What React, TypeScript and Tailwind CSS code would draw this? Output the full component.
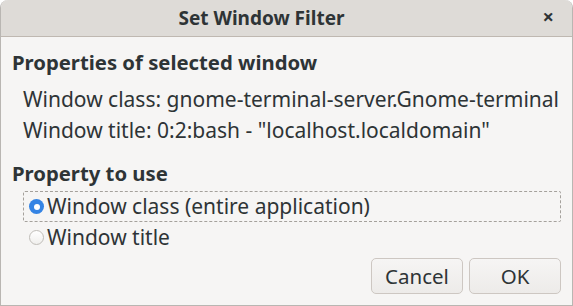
import React from "react";

const Radio: React.FC<{ checked?: boolean }> = ({ checked }) =>
  checked ? (
    <span className="w-[15px] h-[15px] rounded-full bg-[#3584e4] flex items-center justify-center shrink-0">
      <span className="w-[6px] h-[6px] rounded-full bg-white" />
    </span>
  ) : (
    <span className="w-[15px] h-[15px] rounded-full border border-[#c0bdb8] bg-gradient-to-b from-white to-[#f0efed] shrink-0" />
  );

const App: React.FC = () => {
  return (
    <div className="w-[573px] h-[306px] bg-[#f6f5f4] text-[#2e3436] font-['Noto_Sans',sans-serif] flex flex-col rounded-t-[8px] border border-t-0 border-[#b9b6b2] overflow-hidden">
      <div className="h-[37px] bg-[#dedbd7] border-b border-[#bfb8b1] flex items-center relative shrink-0">
        <span className="flex-1 text-center font-bold text-[19px] pt-[1px] pr-[50px]">Set Window Filter</span>
        <span className="absolute right-[18px] top-[7px] text-[20px] font-bold leading-none">×</span>
      </div>
      <div className="flex flex-col px-[11px] pt-[12px]">
        <p className="font-bold text-[20.3px] leading-[26px]">Properties of selected window</p>
        <div className="pl-[11px] pt-[9px] text-[21px] leading-[31px]">
          <p>Window class: gnome-terminal-server.Gnome-terminal</p>
          <p>Window title: 0:2:bash - "localhost.localdomain"</p>
        </div>
        <p className="font-bold text-[20.3px] leading-[26px] mt-[14px]">Property to use</p>
        <div className="flex flex-col mt-[5px] text-[21px]">
          <div className="ml-[11px] h-[31px] border border-dashed border-[#a5a19c] rounded-[2px] flex items-center gap-[3px] pl-[5px]">
            <Radio checked />
            <span>Window class (entire application)</span>
          </div>
          <div className="ml-[11px] h-[31px] flex items-center gap-[3px] pl-[6px]">
            <Radio />
            <span>Window title</span>
          </div>
        </div>
        <div className="flex justify-end gap-[6px] mt-[5px]">
          <button className="w-[92px] h-[36px] rounded-[5px] border border-[#cdc7c2] bg-gradient-to-b from-[#f6f5f4] to-[#edebe9] text-[20.5px]">Cancel</button>
          <button className="w-[92px] h-[36px] rounded-[5px] border border-[#cdc7c2] bg-gradient-to-b from-[#f6f5f4] to-[#edebe9] text-[20.5px]">OK</button>
        </div>
      </div>
    </div>
  );
};

export default App;
